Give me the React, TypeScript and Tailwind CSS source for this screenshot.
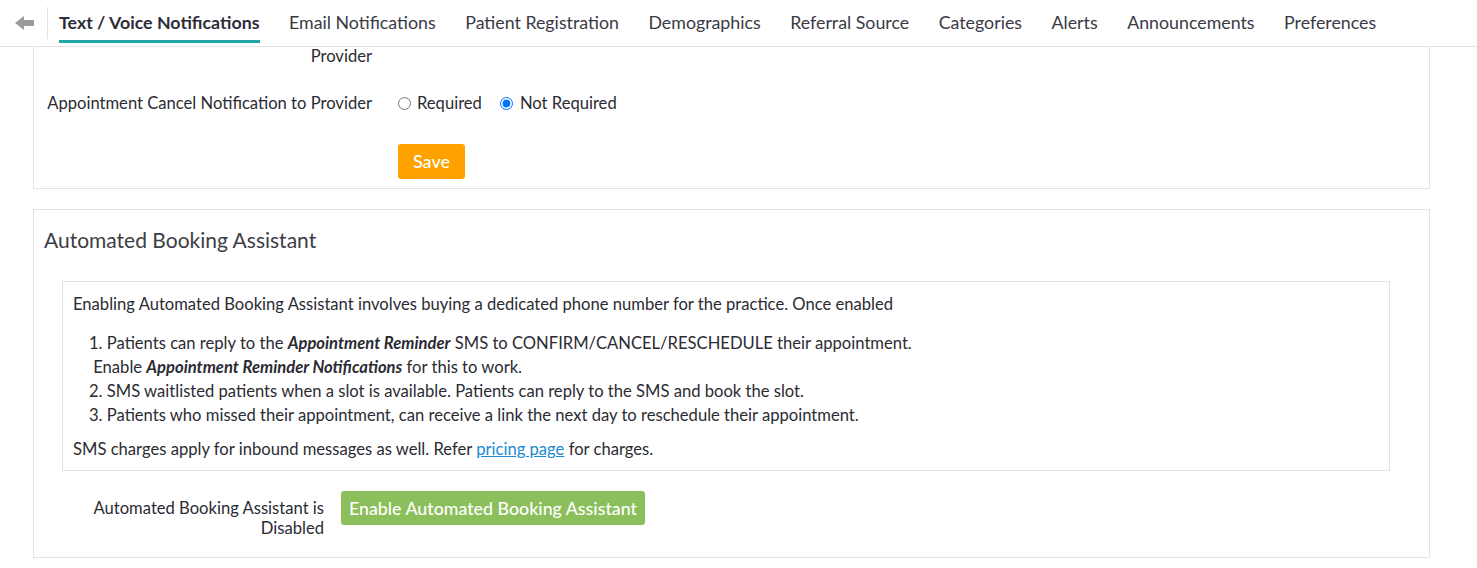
import React from "react";

const tabs = [
  "Text / Voice Notifications",
  "Email Notifications",
  "Patient Registration",
  "Demographics",
  "Referral Source",
  "Categories",
  "Alerts",
  "Announcements",
  "Preferences",
];

const TopNav: React.FC = () => {
  return (
    <nav className="flex h-[47px] items-stretch border-b border-[#e3e3e3] bg-white">
      <div className="flex w-[47px] items-center justify-center">
        <svg width="19" height="14" viewBox="0 0 19 14" className="ml-[1px]">
          <polygon points="0,7 9,0 9,4 19,4 19,10 9,10 9,14" fill="#9a9a9a" />
        </svg>
      </div>
      <div className="my-[7px] w-px bg-[#e3e3e3]" />
      <div className="ml-[11px] flex items-start gap-[29.5px]">
        {tabs.map((t, i) => (
          <div key={t} className="flex flex-col pt-[11px]">
            <span
              className={
                i === 0
                  ? "text-[17.8px] font-bold leading-[22px] text-[#2d2d3a]"
                  : "text-[17.8px] leading-[22px] text-[#3a3a44]"
              }
            >
              {t}
            </span>
            <div
              className={
                i === 0 ? "mt-[7px] h-[3px] bg-[#21a5a8]" : "mt-[7px] h-[3px]"
              }
            />
          </div>
        ))}
      </div>
    </nav>
  );
};

const NotificationCard: React.FC = () => {
  return (
    <div className="border-x border-b border-[#e3e3e3] pb-[9px]">
      <div className="-mt-[1px] flex leading-[20px]">
        <div className="w-[338px] text-right">Provider</div>
      </div>
      <div className="mt-[27px] flex items-center leading-[20px]">
        <div className="w-[338px] text-right">
          Appointment Cancel Notification to Provider
        </div>
        <div className="ml-[26px] flex items-center">
          <label className="flex items-center">
            <input type="radio" name="cancel" className="m-0 h-[13px] w-[13px]" />
            <span className="ml-[6px]">Required</span>
          </label>
          <label className="ml-[18px] flex items-center">
            <input
              type="radio"
              name="cancel"
              defaultChecked
              className="m-0 h-[13px] w-[13px]"
            />
            <span className="ml-[7px]">Not Required</span>
          </label>
        </div>
      </div>
      <div className="mt-[31px] flex">
        <button className="ml-[364px] h-[35px] w-[67px] rounded-[3px] bg-[#ffa200] text-[18px] font-medium text-white">
          Save
        </button>
      </div>
    </div>
  );
};

const BookingCard: React.FC = () => {
  return (
    <div className="mt-[20px] border border-[#e3e3e3] pb-[19px]">
      <h2 className="ml-[10px] mt-[17px] text-[21px] leading-[26px] text-[#3d3d45]">
        Automated Booking Assistant
      </h2>
      <div className="ml-[28px] mr-[39px] mt-[28px] border border-[#e3e3e3] pb-[11px] pl-[10px] pt-[12px] leading-[20px]">
        <p>
          Enabling Automated Booking Assistant involves buying a dedicated phone
          number for the practice. Once enabled
        </p>
        <ol className="mt-[17px] list-inside list-decimal pl-[16px] leading-[24px]">
          <li>
            Patients can reply to the{" "}
            <b className="italic">Appointment Reminder</b> SMS to
            CONFIRM/CANCEL/RESCHEDULE their appointment.
            <br />
            &nbsp;Enable <b className="italic">Appointment Reminder Notifications</b>{" "}
            for this to work.
          </li>
          <li>
            SMS waitlisted patients when a slot is available. Patients can reply
            to the SMS and book the slot.
          </li>
          <li>
            Patients who missed their appointment, can receive a link the next
            day to reschedule their appointment.
          </li>
        </ol>
        <p className="mt-[12px]">
          SMS charges apply for inbound messages as well. Refer{" "}
          <a href="#" className="text-[#1b8ad0] underline">
            pricing page
          </a>{" "}
          for charges.
        </p>
      </div>
      <div className="mt-[20px] flex items-start">
        <div className="mt-[7px] w-[290px] text-right leading-[20px]">
          Automated Booking Assistant is
          <br />
          Disabled
        </div>
        <button className="ml-[17px] h-[34px] rounded-[3px] bg-[#8bbf5b] px-[8px] text-[17.8px] font-medium text-white">
          Enable Automated Booking Assistant
        </button>
      </div>
    </div>
  );
};

export default function App() {
  return (
    <div
      className="h-[568px] overflow-hidden bg-white text-[16.6px] text-[#2b2b33]"
      style={{ fontFamily: "Lato, 'Open Sans', sans-serif" }}
    >
      <TopNav />
      <main className="ml-[33px] mr-[47px]">
        <NotificationCard />
        <BookingCard />
      </main>
    </div>
  );
}
